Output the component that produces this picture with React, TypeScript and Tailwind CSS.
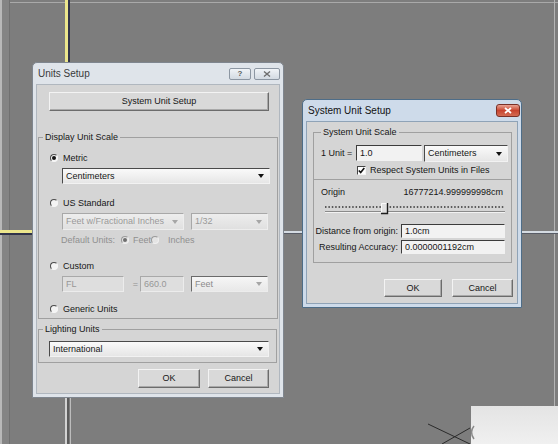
import type { ReactNode } from "react";

type Tone = "on" | "dim" | "half";

function Radio({ on, dim }: { on?: boolean; dim?: boolean }) {
  return (
    <span
      className={`flex h-[8px] w-[8px] shrink-0 items-center justify-center rounded-full border ${
        dim
          ? "border-[#f0f0f0] border-t-[#9a9a9a] border-l-[#9a9a9a] bg-[#e4e4e4]"
          : "border-[#f6f6f6] border-t-[#4a4a4a] border-l-[#4a4a4a] bg-[#f4f4f4]"
      }`}
    >
      {on && <span className={`h-[4px] w-[4px] rounded-full ${dim ? "bg-[#6e6e6e]" : "bg-[#161616]"}`} />}
    </span>
  );
}

function RadioRow({ label, on, className }: { label: string; on?: boolean; className: string }) {
  return (
    <div className={`flex h-[12px] items-center gap-[5px] ${className}`}>
      <Radio on={on} />
      <span>{label}</span>
    </div>
  );
}

function Arrow({ color }: { color: string }) {
  return (
    <svg width="6" height="4" viewBox="0 0 6 4" className="shrink-0">
      <path d="M0 0h6L3 4z" fill={color} />
    </svg>
  );
}

function Combo({ text, className, tone = "on" }: { text: string; className: string; tone?: Tone }) {
  const look =
    tone === "on"
      ? "border-[#f2f2f2] border-t-[#4a4a4a] border-l-[#4a4a4a] from-[#fafafa] to-[#e6e6e6] text-[#161616]"
      : tone === "half"
        ? "border-[#ececec] border-t-[#6a6a6a] border-l-[#6a6a6a] from-[#f6f6f6] to-[#e8e8e8] text-[#8c8c8c]"
        : "border-[#ededed] border-t-[#a8a8a8] border-l-[#a8a8a8] from-[#ededed] to-[#e0e0e0] text-[#9a9a9a]";
  return (
    <div className={`flex items-center justify-between border bg-linear-to-b pl-[3px] pr-[5px] ${look} ${className}`}>
      <span className="whitespace-nowrap">{text}</span>
      <Arrow color={tone === "on" ? "#111" : "#a6a6a6"} />
    </div>
  );
}

function Field({ text, className, dim }: { text: string; className: string; dim?: boolean }) {
  return (
    <div
      className={`flex items-center border pl-[3px] ${
        dim
          ? "border-[#ececec] border-t-[#a9a9a9] border-l-[#a9a9a9] bg-[#dedede] text-[#979797]"
          : "border-[#f2f2f2] border-t-[#3c3c3c] border-l-[#3c3c3c] bg-[#f2f2f2] text-[#161616]"
      } ${className}`}
    >
      {text}
    </div>
  );
}

function PushButton({ className, children }: { className: string; children: ReactNode }) {
  return (
    <div
      className={`flex items-center justify-center border border-[#6c6c6c] border-t-[#f3f3f3] border-l-[#f3f3f3] bg-[#d9d9d9] shadow-[inset_-1px_-1px_0_#a9a9a9] ${className}`}
    >
      {children}
    </div>
  );
}

function Group({ title, className, children }: { title: string; className: string; children: ReactNode }) {
  return (
    <fieldset className={`border border-[#a0a0a0] ${className}`}>
      <legend className="ml-[4px] px-[2px] leading-[11px]">{title}</legend>
      {children}
    </fieldset>
  );
}

function UnitsSetup() {
  return (
    <div className="absolute left-[32px] top-[62px] flex h-[336px] w-[252px] flex-col rounded-t-[5px] border border-[#7f868f] bg-[#dfe4ea]">
      <div className="flex h-[21px] shrink-0 items-center justify-between pl-[5px] pr-[3px]">
        <span className="text-[10px] text-[#3a3a3a]">Units Setup</span>
        <div className="flex gap-[3px]">
          <span className="flex h-[12px] w-[22px] items-center justify-center rounded-[2px] border border-[#8c96a2] bg-linear-to-b from-[#f0f3f7] to-[#d3dae2] text-[8px] font-bold leading-none text-[#5a5a5a]">
            ?
          </span>
          <span className="flex h-[12px] w-[26px] items-center justify-center rounded-[2px] border border-[#8c96a2] bg-linear-to-b from-[#f0f3f7] to-[#d3dae2]">
            <svg width="8" height="6" viewBox="0 0 8 6">
              <path d="M1 0.5L7 5.5M7 0.5L1 5.5" stroke="#6f6f6f" strokeWidth="1.4" />
            </svg>
          </span>
        </div>
      </div>

      <div className="mx-[3px] mb-[3px] flex flex-1 flex-col border border-[#b0b7bf] bg-[#d5d5d5]">
        <PushButton className="ml-[12px] mt-[7px] h-[19px] w-[220px]">System Unit Setup</PushButton>

        <Group title="Display Unit Scale" className="mx-[1px] mt-[21px] pb-[3px]">
          <RadioRow on label="Metric" className="ml-[11px] mt-[9px]" />
          <Combo text="Centimeters" className="ml-[23px] mt-[4px] h-[16px] w-[208px]" />

          <RadioRow label="US Standard" className="ml-[11px] mt-[13px]" />
          <div className="ml-[23px] mt-[4px] flex gap-[7px]">
            <Combo tone="dim" text="Feet w/Fractional Inches" className="h-[17px] w-[122px]" />
            <Combo tone="dim" text="1/32" className="h-[17px] w-[77px]" />
          </div>
          <div className="ml-[22px] mt-[4px] flex h-[12px] items-center text-[#909090]">
            <span>Default Units:</span>
            <span className="ml-[6px]">
              <Radio on dim />
            </span>
            <span className="ml-[4px]">Feet</span>
            <Radio dim />
            <span className="ml-[9px]">Inches</span>
          </div>

          <RadioRow label="Custom" className="ml-[11px] mt-[14px]" />
          <div className="ml-[23px] mt-[4px] flex h-[16px] items-center">
            <Field dim text="FL" className="h-[16px] w-[62px]" />
            <span className="w-[16px] pr-[2px] text-right text-[#8e8e8e]">=</span>
            <Field dim text="660.0" className="h-[16px] w-[44px]" />
            <Combo tone="half" text="Feet" className="ml-[7px] h-[16px] w-[77px]" />
          </div>

          <RadioRow label="Generic Units" className="ml-[11px] mt-[11px]" />
        </Group>

        <Group title="Lighting Units" className="ml-[1px] mr-[2px] mt-[5px] pb-[5px]">
          <Combo text="International" className="ml-[10px] mt-[6px] h-[16px] w-[220px]" />
        </Group>

        <div className="mt-[6px] flex justify-end gap-[8px] pr-[10px]">
          <PushButton className="h-[19px] w-[62px]">OK</PushButton>
          <PushButton className="h-[19px] w-[61px]">Cancel</PushButton>
        </div>
      </div>
    </div>
  );
}

function SystemUnitSetup() {
  return (
    <div className="absolute left-[302px] top-[99px] flex h-[209px] w-[220px] flex-col rounded-t-[5px] border border-[#4e6d88] bg-[#cedbea]">
      <div className="flex h-[21px] shrink-0 items-center justify-between pl-[5px] pr-[1px]">
        <span className="text-[10px] text-[#121212]">System Unit Setup</span>
        <span className="flex h-[13px] w-[24px] items-center justify-center rounded-[3px] border border-[#7a3027] bg-linear-to-b from-[#e8a293] via-[#c8442f] to-[#d36a52]">
          <svg width="8" height="7" viewBox="0 0 8 7">
            <path d="M1 1L7 6M7 1L1 6" stroke="#fff" strokeWidth="1.8" />
          </svg>
        </span>
      </div>

      <div className="mx-[3px] mb-[3px] flex flex-1 flex-col border border-[#8fa3b7] bg-[#d5d5d5]">
        <fieldset className="ml-[6px] mr-[5px] mt-[5px] border border-[#a0a0a0] pb-[4px]">
          <legend className="ml-[7px] px-[2px] leading-[11px]">System Unit Scale</legend>
          <div className="ml-[7px] mt-[7px] flex items-start">
            <span className="flex h-[16px] w-[35px] items-center">1 Unit =</span>
            <Field text="1.0" className="h-[16px] w-[66px]" />
            <Combo text="Centimeters" className="ml-[2px] h-[17px] w-[84px]" />
          </div>
          <div className="ml-[43px] mt-[3px] flex h-[10px] items-center gap-[4px]">
            <span className="flex h-[9px] w-[9px] items-center justify-center border border-[#f4f4f4] border-t-[#444] border-l-[#444] bg-white">
              <svg width="7" height="7" viewBox="0 0 7 7">
                <path d="M0.8 3.4L2.7 5.6L6.3 0.9" stroke="#111" strokeWidth="1.6" fill="none" />
              </svg>
            </span>
            <span>Respect System Units in Files</span>
          </div>
        </fieldset>

        <div className="ml-[6px] mr-[5px] border border-t-0 border-[#a0a0a0] pb-[8px]">
          <div className="ml-[7px] mr-[8px] mt-[6px] flex h-[12px] items-center justify-between">
            <span>Origin</span>
            <span>16777214.999999998cm</span>
          </div>
          <svg width="180" height="13" viewBox="0 0 180 13" className="ml-[11px] mt-[4px] block">
            <line x1="0" y1="5" x2="180" y2="5" stroke="#333" strokeWidth="1.5" strokeDasharray="1.5 1.9" />
            <line x1="0" y1="9.5" x2="180" y2="9.5" stroke="#8a8a8a" strokeWidth="1" />
            <line x1="0" y1="10.5" x2="180" y2="10.5" stroke="#f2f2f2" strokeWidth="1" />
            <rect x="56" y="1.5" width="6" height="10" fill="#e2e2e2" />
            <path d="M56.5 11V1.5H62" stroke="#fafafa" strokeWidth="1" fill="none" />
            <path d="M62.5 1V11.5H56" stroke="#1e1e1e" strokeWidth="1.4" fill="none" />
          </svg>
          <div className="mt-[9px] flex h-[14px] items-center">
            <span className="w-[84px] whitespace-nowrap text-right">Distance from origin:</span>
            <Field text="1.0cm" className="ml-[3px] h-[14px] w-[104px]" />
          </div>
          <div className="mt-[2px] flex h-[14px] items-center">
            <span className="w-[84px] whitespace-nowrap text-right">Resulting Accuracy:</span>
            <Field text="0.0000001192cm" className="ml-[3px] h-[14px] w-[104px]" />
          </div>
        </div>

        <div className="mt-[16px] flex justify-end gap-[10px] pr-[4px]">
          <PushButton className="h-[18px] w-[58px]">OK</PushButton>
          <PushButton className="h-[18px] w-[61px]">Cancel</PushButton>
        </div>
      </div>
    </div>
  );
}

// viewport separators drawn behind the dialogs
function ViewportGrid() {
  return (
    <>
      <div className="absolute left-0 top-[2px] h-px w-full bg-[#a9a9a9]" />
      <div className="absolute left-0 top-0 h-full w-[2px] bg-[#b8b8b8]" />
      <div className="absolute left-[2px] top-0 h-full w-[7px] bg-[#848484]" />
      <div className="absolute left-[9px] top-0 h-full w-px bg-[#707070]" />
      <div className="absolute left-[554px] top-0 h-[406px] w-px bg-[#b4b4b4]" />

      <div className="absolute left-[65px] top-0 h-[233px] w-[3px] bg-[#ece68c]" />
      <div className="absolute left-[68px] top-0 h-[235px] w-[2px] bg-[#30334a]" />
      <div className="absolute left-0 top-[230px] h-[3px] w-[68px] bg-[#ece68c]" />
      <div className="absolute left-0 top-[233px] h-[2px] w-[70px] bg-[#30334a]" />

      <div className="absolute left-[65px] top-[235px] h-[209px] w-[2px] bg-[#d2d2d2]" />
      <div className="absolute left-[67px] top-[235px] h-[209px] w-[2px] bg-[#5c5c5c]" />
      <div className="absolute left-[70px] top-[235px] h-[209px] w-px bg-[#bdbdbd]" />
      <div className="absolute left-[70px] top-[231px] h-[2px] w-[488px] bg-[#d4dbe2]" />
      <div className="absolute left-[70px] top-[233px] h-px w-[488px] bg-[#585c66]" />

      <div className="absolute left-[471px] top-[406px] h-[38px] w-[87px] bg-linear-to-b from-[#e4e4e4] to-[#f0f0f0]" />
      <svg width="60" height="30" viewBox="0 0 60 30" className="absolute left-[420px] top-[414px]">
        <path d="M8 10L50 30" stroke="#2a2a2a" strokeWidth="1" />
        <path d="M22 30L50 14" stroke="#2a2a2a" strokeWidth="1" />
        <path d="M54 12Q49 18 54 25" stroke="#8a8a8a" strokeWidth="1.5" fill="none" />
      </svg>
    </>
  );
}

export default function App() {
  return (
    <div className="relative h-[444px] w-[558px] overflow-hidden bg-[#7d7d7d] text-[9px] leading-[11px] text-[#161616] [font-family:'Liberation_Sans',Arial,sans-serif]">
      <ViewportGrid />
      <UnitsSetup />
      <SystemUnitSetup />
    </div>
  );
}
